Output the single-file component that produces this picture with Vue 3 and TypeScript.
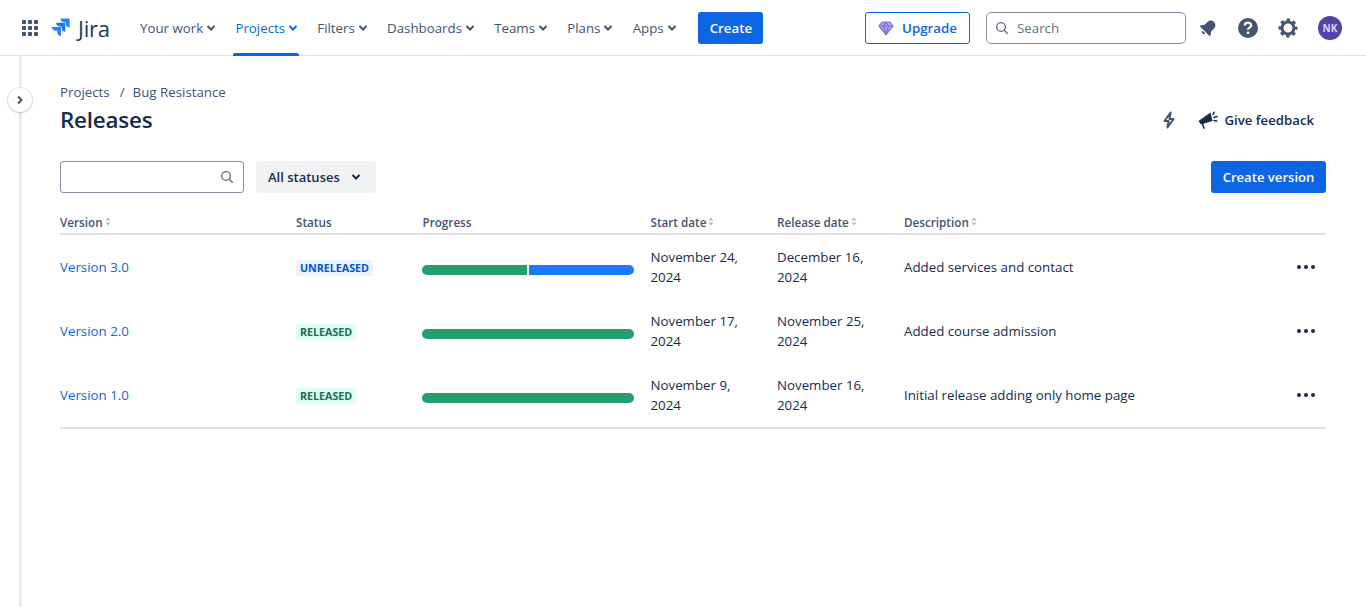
<script setup lang="ts">
interface Release {
  name: string
  status: 'UNRELEASED' | 'RELEASED'
  done: number
  start: string
  end: string
  description: string
}

const navItems = ['Your work', 'Projects', 'Filters', 'Dashboards', 'Teams', 'Plans', 'Apps']

const columns = [
  { label: 'Version', sort: true },
  { label: 'Status', sort: false },
  { label: 'Progress', sort: false },
  { label: 'Start date', sort: true },
  { label: 'Release date', sort: true },
  { label: 'Description', sort: true },
]

const releases: Release[] = [
  { name: 'Version 3.0', status: 'UNRELEASED', done: 49.5, start: 'November 24, 2024', end: 'December 16, 2024', description: 'Added services and contact' },
  { name: 'Version 2.0', status: 'RELEASED', done: 100, start: 'November 17, 2024', end: 'November 25, 2024', description: 'Added course admission' },
  { name: 'Version 1.0', status: 'RELEASED', done: 100, start: 'November 9, 2024', end: 'November 16, 2024', description: 'Initial release adding only home page' },
]
</script>

<template>
  <div class="page">
    <header class="topbar">
      <svg class="apps-icon" width="16" height="16" viewBox="0 0 16 16" fill="#44546f">
        <rect v-for="n in 9" :key="n" :x="((n - 1) % 3) * 6" :y="Math.floor((n - 1) / 3) * 6" width="4" height="4" rx="0.8" />
      </svg>
      <div class="logo">
        <svg width="20" height="20" viewBox="0 0 20 20" fill="#2684ff">
          <path d="M19 .4h-8.6c0 2.1 1.7 3.8 3.800 3.800h1.600v1.500c0 2.100 1.700 3.800 3.800 3.800V1c0-.3-.3-.6-.6-.6z" />
          <path d="M14.700 4.700H6.100c0 2.100 1.700 3.800 3.800 3.800h1.600V10c0 2.100 1.700 3.800 3.800 3.800V5.300c0-.3-.3-.6-.6-.6z" fill="#2176ee" />
          <path d="M10.400 9H1.800c0 2.100 1.700 3.800 3.800 3.800h1.600v1.500c0 2.100 1.700 3.800 3.800 3.800V9.600c0-.3-.3-.6-.6-.6z" />
        </svg>
        <span class="logo-text">Jira</span>
      </div>
      <nav class="nav">
        <div v-for="item in navItems" :key="item" class="nav-item" :class="{ active: item === 'Projects' }">
          <span>{{ item }}</span>
          <svg width="10" height="8" viewBox="0 0 10 8" fill="none" stroke="currentColor" stroke-width="2">
            <path d="M1.500 2 5 5.500 8.500 2" />
          </svg>
        </div>
      </nav>
      <button class="btn-primary create">Create</button>

      <div class="topbar-right">
        <button class="upgrade">
          <svg width="16" height="16" viewBox="0 0 16 16" fill="#b3a6e8" stroke="#8270db" stroke-width="1.2" stroke-linejoin="round">
            <path d="M4 2h8l3 4-7 8.500L1 6z" />
            <path d="M1 6h14M5.500 6 8 14.500 10.500 6 8 2 5.500 6" fill="none" />
          </svg>
          Upgrade
        </button>
        <div class="search">
          <svg width="14" height="14" viewBox="0 0 14 14" fill="none" stroke="#626f86" stroke-width="1.4">
            <circle cx="6" cy="6" r="4.4" />
            <path d="m9.200 9.200 3.600 3.600" />
          </svg>
          <span>Search</span>
        </div>
        <svg class="bell" width="20" height="20" viewBox="0 0 20 20" fill="#44546f">
          <g transform="rotate(45 10 10)">
            <path d="M10 1.500c-3 0-4.700 2.200-4.700 5v3.600L3 13.400v1.200h14v-1.200l-2.300-3.300V6.500c0-2.800-1.700-5-4.700-5z" />
            <path d="M8 15.800h4c0 1.100-.9 2-2 2s-2-.9-2-2z" />
          </g>
        </svg>
        <svg class="help" width="22" height="22" viewBox="0 0 22 22">
          <circle cx="11" cy="11" r="10" fill="#44546f" />
          <path d="M7.800 8.500c0-1.800 1.400-2.800 3.200-2.800s3.200 1 3.200 2.600c0 2.200-3.200 2.300-3.200 4.400" fill="none" stroke="#fff" stroke-width="2.200" />
          <circle cx="11" cy="15.800" r="1.400" fill="#fff" />
        </svg>
        <svg class="gear" width="20" height="20" viewBox="0 0 20 20" fill="none" stroke="#44546f">
          <circle cx="10" cy="10" r="6" stroke-width="3" />
          <circle cx="10" cy="10" r="8" stroke-width="3" stroke-dasharray="3.300 2.983" stroke-dashoffset="1.650" />
        </svg>
        <div class="avatar">NK</div>
      </div>
    </header>

    <div class="body">
      <aside class="rail">
        <button class="rail-toggle">
          <svg width="8" height="10" viewBox="0 0 8 10" fill="none" stroke="#44546f" stroke-width="2">
            <path d="M2 1.500 5.500 5 2 8.500" />
          </svg>
        </button>
      </aside>

      <main class="content">
        <div class="breadcrumbs">
          <span>Projects</span>
          <span class="sep">/</span>
          <span>Bug Resistance</span>
        </div>
        <div class="title-row">
          <h1>Releases</h1>
          <div class="title-actions">
            <svg width="16" height="18" viewBox="0 0 16 18" fill="none" stroke="#44546f" stroke-width="2" stroke-linejoin="round">
              <path d="M9.500 1.500 3.500 10h4l-1 6.500 6-8.500h-4z" />
            </svg>
            <div class="feedback">
              <svg width="20" height="20" viewBox="0 0 20 20" fill="#172b4d">
                <path d="M.5 11 12.500 2.500l2 8.500L3 14.500z" />
                <path d="m4.500 14 1.700 4.800" stroke="#172b4d" stroke-width="1.500" />
                <path d="m15 4.500 1.300-2.300M16 7.500l3-1M16 10.500l2.700.6" stroke="#172b4d" stroke-width="1.500" stroke-linecap="round" />
              </svg>
              <span>Give feedback</span>
            </div>
          </div>
        </div>

        <div class="toolbar">
          <div class="filter-input">
            <svg width="14" height="14" viewBox="0 0 14 14" fill="none" stroke="#626f86" stroke-width="1.400">
              <circle cx="6" cy="6" r="4.400" />
              <path d="m9.200 9.200 3.600 3.600" />
            </svg>
          </div>
          <button class="status-select">
            All statuses
            <svg width="10" height="8" viewBox="0 0 10 8" fill="none" stroke="#172b4d" stroke-width="2">
              <path d="M1.500 2 5 5.500 8.500 2" />
            </svg>
          </button>
          <button class="btn-primary create-version">Create version</button>
        </div>

        <div class="table">
          <div class="row head">
            <div v-for="col in columns" :key="col.label" class="th">
              {{ col.label }}
              <svg v-if="col.sort" width="6" height="9" viewBox="0 0 6 9" fill="#b3b9c4">
                <path d="M3 .5 5.500 3.500H.5zM3 8.500.5 5.500h5z" />
              </svg>
            </div>
            <div></div>
          </div>
          <div v-for="r in releases" :key="r.name" class="row item">
            <a class="version">{{ r.name }}</a>
            <div><span class="lozenge" :class="r.status.toLowerCase()">{{ r.status }}</span></div>
            <div class="progress">
              <div class="seg done" :style="{ width: r.done + '%' }"></div>
              <div v-if="r.done < 100" class="seg todo"></div>
            </div>
            <div class="date">{{ r.start }}</div>
            <div class="date">{{ r.end }}</div>
            <div>{{ r.description }}</div>
            <div class="more"><i></i><i></i><i></i></div>
          </div>
        </div>
      </main>
    </div>
  </div>
</template>

<style>
html, body {
  margin: 0;
  background: #fff;
}
</style>

<style scoped>
.page {
  height: 607px;
  overflow: hidden;
  display: flex;
  flex-direction: column;
  font-family: "Open Sans", "Noto Sans", sans-serif;
  font-size: 13.3px;
  color: #172b4d;
}

.topbar {
  height: 55px;
  flex-shrink: 0;
  border-bottom: 1px solid #dfe1e4;
  display: flex;
  align-items: center;
  padding-left: 22px;
  padding-right: 24px;
}

.apps-icon {
  flex-shrink: 0;
}

.logo {
  display: flex;
  align-items: center;
  margin-left: 12px;
  gap: 8px;
  width: 58px;
}

.logo svg,
.logo-text {
  flex-shrink: 0;
}

.logo-text {
  font-size: 22px;
  color: #253858;
  letter-spacing: -0.2px;
}

.nav {
  display: flex;
  height: 100%;
  margin-left: 32px;
  gap: 19.2px;
}

.nav-item {
  position: relative;
  display: flex;
  align-items: center;
  gap: 3px;
  color: #44546f;
  font-weight: 500;
}

.nav-item.active {
  color: #0c66e4;
}

.nav-item.active::after {
  content: '';
  position: absolute;
  left: -2px;
  right: -1px;
  bottom: -1px;
  height: 3px;
  border-radius: 2px 2px 0 0;
  background: #0c66e4;
}

.btn-primary {
  border: none;
  border-radius: 3px;
  background: #0c66e4;
  color: #fff;
  font: inherit;
  font-weight: 600;
  height: 32px;
  padding: 0 12px;
}

.create {
  margin-left: 21px;
  width: 65px;
}

.topbar-right {
  margin-left: auto;
  display: flex;
  align-items: center;
}

.upgrade {
  height: 32px;
  width: 105px;
  display: flex;
  align-items: center;
  justify-content: center;
  gap: 8px;
  border: 1px solid #0c66e4;
  border-radius: 3px;
  background: #fff;
  color: #0c66e4;
  font: inherit;
  font-weight: 600;
  padding: 0;
}

.search {
  margin-left: 16px;
  width: 200px;
  height: 32px;
  box-sizing: border-box;
  border: 1px solid #8590a2;
  border-radius: 5px;
  display: flex;
  align-items: center;
  gap: 8px;
  padding-left: 8px;
  color: #626f86;
}

.bell {
  margin-left: 12px;
}

.help {
  margin-left: 19px;
}

.gear {
  margin-left: 19px;
}

.avatar {
  margin-left: 20px;
  width: 24px;
  height: 24px;
  border-radius: 50%;
  background: #5243aa;
  color: #dcd6f7;
  font-size: 10px;
  font-weight: 700;
  display: flex;
  align-items: center;
  justify-content: center;
}

.body {
  flex: 1;
  display: flex;
  min-height: 0;
}

.rail {
  position: relative;
  width: 22px;
  flex-shrink: 0;
  box-sizing: border-box;
  border-right: 3px solid #ebecf0;
}

.rail-toggle {
  position: absolute;
  top: 32px;
  left: 8px;
  width: 24px;
  height: 24px;
  border-radius: 50%;
  border: none;
  background: #fff;
  box-shadow: 0 0 0 1px rgba(9, 30, 66, 0.08), 0 1px 2px rgba(9, 30, 66, 0.2);
  display: flex;
  align-items: center;
  justify-content: center;
  padding: 0;
}

.content {
  flex: 1;
  padding: 27px 40px 0 38px;
  min-width: 0;
}

.breadcrumbs {
  display: flex;
  gap: 9px;
  height: 18px;
  line-height: 18px;
  color: #44546f;
}

.sep {
  padding-left: 1px;
  margin-right: -1px;
}

.title-row {
  display: flex;
  align-items: center;
  justify-content: space-between;
  margin-top: 3px;
  height: 32px;
}

h1 {
  margin: -2px 0 0;
  font-size: 22.4px;
  font-weight: 600;
  color: #172b4d;
  letter-spacing: -0.2px;
}

.title-actions {
  display: flex;
  align-items: center;
  gap: 21px;
  padding-right: 12px;
}

.feedback {
  display: flex;
  align-items: center;
  gap: 7px;
  font-weight: 600;
  font-size: 13.2px;
}

.toolbar {
  display: flex;
  align-items: center;
  margin-top: 25px;
  height: 32px;
}

.filter-input {
  width: 184px;
  height: 32px;
  box-sizing: border-box;
  border: 1px solid #8590a2;
  border-radius: 3px;
  display: flex;
  align-items: center;
  justify-content: flex-end;
  padding-right: 9px;
}

.status-select {
  margin-left: 12px;
  width: 120px;
  height: 32px;
  border: none;
  border-radius: 3px;
  background: #f1f2f4;
  color: #172b4d;
  font: inherit;
  font-size: 13px;
  font-weight: 600;
  display: flex;
  align-items: center;
  justify-content: space-between;
  padding: 0 15px 0 12px;
}

.create-version {
  margin-left: auto;
  width: 115px;
  padding: 0;
  font-size: 13.1px;
}

.table {
  margin-top: 16px;
  border-bottom: 2px solid #dfe1e6;
}

.row {
  display: grid;
  grid-template-columns: 236px 126.5px 228px 126.5px 127px 1fr 40px;
  align-items: center;
}

.head {
  height: 23px;
  padding-top: 1px;
  border-bottom: 2px solid #dfe1e6;
  font-size: 11.7px;
  font-weight: 600;
  color: #44546f;
}

.th {
  display: flex;
  align-items: center;
  gap: 2px;
}

.item {
  height: 64px;
  line-height: 20px;
}

.version {
  color: #0c66e4;
}

.lozenge {
  display: inline-block;
  font-size: 10.7px;
  font-weight: 700;
  line-height: 16px;
  padding: 0 4px;
  border-radius: 3px;
}

.lozenge.unreleased {
  background: #e9f2ff;
  color: #0055cc;
}

.lozenge.released {
  background: #dcfff1;
  color: #216e4e;
}

.progress {
  display: flex;
  width: 212px;
  height: 10px;
  margin-top: 6px;
  margin-left: -0.5px;
  gap: 2px;
  border-radius: 5px;
  overflow: hidden;
}

.seg {
  height: 100%;
}

.seg.done {
  background: #22a06b;
}

.seg.todo {
  flex: 1;
  background: #1d7afc;
}

.date {
  padding-right: 16px;
}

.more {
  display: flex;
  justify-content: flex-end;
  gap: 3px;
  padding-right: 11px;
}

.more i {
  width: 4px;
  height: 4px;
  border-radius: 50%;
  background: #172b4d;
}
</style>
